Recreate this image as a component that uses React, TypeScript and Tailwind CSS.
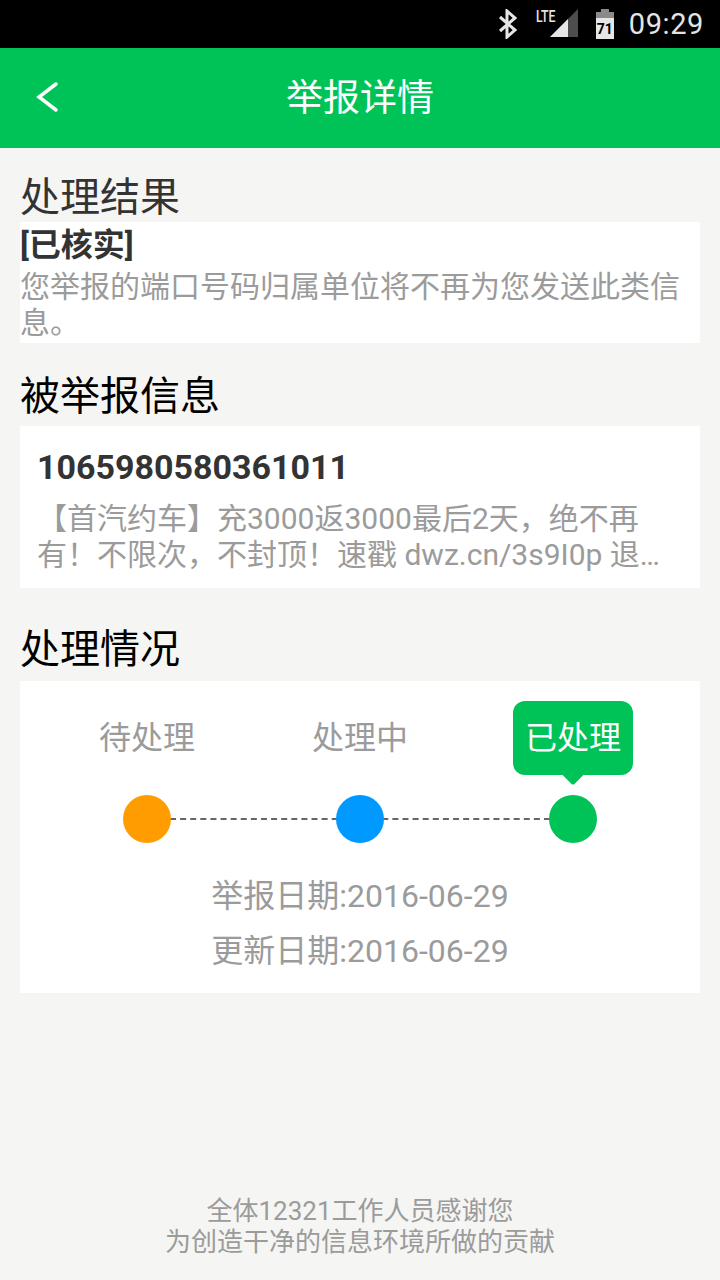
import React from "react";

const font = { fontFamily: '"Roboto","Noto Sans CJK SC",sans-serif' };

function Step({ label, color, active }: { label: string; color: string; active?: boolean }) {
  return (
    <div className="relative flex w-[120px] flex-col items-center">
      <div className="flex h-[74px] items-center justify-center">
        {active ? (
          <div className="relative flex h-[74px] w-[120px] items-center justify-center rounded-[12px] bg-[#00c357] text-[32px] text-white">
            {label}
            <div className="absolute bottom-[-7px] left-[52px] h-4 w-4 rotate-45 rounded-[2px] bg-[#00c357]" />
          </div>
        ) : (
          <span className="text-[32px] text-[#9b9b9b]">{label}</span>
        )}
      </div>
      <div className={`mt-5 h-[48px] w-[48px] rounded-full ${color}`} />
    </div>
  );
}

export default function App() {
  return (
    <div style={font} className="flex h-[1280px] w-[720px] flex-col overflow-hidden bg-[#f5f5f3]">
      <div className="flex h-12 items-center justify-end bg-black pr-4 text-[#e4e4e4]">
        <svg width="22" height="30" viewBox="0 0 22 30" fill="none" stroke="#e6e6e6" strokeWidth="3" className="mr-[17px]">
          <path d="M3 8 L18 21 L10 28 L10 2 L18 9 L3 22" />
        </svg>
        <div className="relative mr-[18px] h-[30px] w-[42px]">
          <svg width="42" height="30" viewBox="0 0 42 30" className="absolute left-0 top-0">
            <path d="M34 0 V28 H6 Z" fill="#4d4d4d" transform="translate(8 0)" />
            <path d="M26 10 V28 H8 Z" fill="#e6e6e6" transform="translate(6 0)" />
          </svg>
          <span className="absolute left-0 top-[-3px] origin-left scale-x-[0.72] text-[17px] font-medium leading-[20px] text-[#e6e6e6]">LTE</span>
        </div>
        <div className="mr-[15px] flex h-[30px] w-[18px] flex-col items-center">
          <div className="h-[3px] w-[8px] bg-[#8a8a8a]" />
          <div className="flex h-[27px] w-[18px] flex-col">
            <div className="h-[6px] bg-[#8a8a8a]" />
            <div className="flex flex-1 items-center justify-center bg-[#e6e6e6] text-[14px] font-bold leading-none text-black">71</div>
          </div>
        </div>
        <span className="text-[29px] leading-none tracking-[0.6px] text-[#e4e4e4]">09:29</span>
      </div>

      <div className="relative flex h-[100px] items-center justify-center bg-[#00c357]">
        <svg width="24" height="32" viewBox="0 0 24 32" fill="none" stroke="white" strokeWidth="3.5" strokeLinecap="round" className="absolute left-[36px] top-[33px]">
          <path d="M20 3 L3 16 L20 29" />
        </svg>
        <span className="text-[37px] leading-none text-white">举报详情</span>
      </div>

      <div className="px-5">
        <div className="mt-[25px] flex h-[49px] items-center text-[40px] leading-none text-[#333333]">处理结果</div>
        <div className="h-[121px] bg-white">
          <div className="h-[47px] text-[32px] font-bold leading-[47px] text-[#333333]">[已核实]</div>
          <div className="text-[30px] leading-[36px] text-[#9b9b9b]">您举报的端口号码归属单位将不再为您发送此类信息。</div>
        </div>

        <div className="mt-[24px] flex h-[59px] items-center text-[40px] leading-none text-black">被举报信息</div>
        <div className="h-[162px] bg-white px-[17px]">
          <div className="pt-[21px] text-[34px] font-bold leading-[40px] text-[#333333]">1065980580361011</div>
          <div className="mt-[14px] line-clamp-2 text-[30px] leading-[36px] text-[#9b9b9b]">【首汽约车】充3000返3000最后2天，绝不再有！不限次，不封顶！速戳 dwz.cn/3s9I0p 退订回复TD</div>
        </div>

        <div className="mt-[31px] flex h-[62px] items-center text-[40px] leading-none text-black">处理情况</div>
        <div className="h-[312px] bg-white">
          <div className="relative flex justify-between px-[67px] pt-5">
            <div className="absolute left-[150px] right-[150px] top-[137px] border-t-2 border-dashed border-[#666666]" />
            <Step label="待处理" color="bg-[#ff9c00]" />
            <Step label="处理中" color="bg-[#0099ff]" />
            <Step label="已处理" color="bg-[#00c357]" active />
          </div>
          <div className="mt-[26px] text-center text-[32px] leading-[55px] text-[#9b9b9b]">
            <div>举报日期:2016-06-29</div>
            <div>更新日期:2016-06-29</div>
          </div>
        </div>
      </div>

      <div className="mt-[203px] text-center text-[26px] leading-[31px] text-[#9b9b9b]">
        <div>全体12321工作人员感谢您</div>
        <div>为创造干净的信息环境所做的贡献</div>
      </div>
    </div>
  );
}
